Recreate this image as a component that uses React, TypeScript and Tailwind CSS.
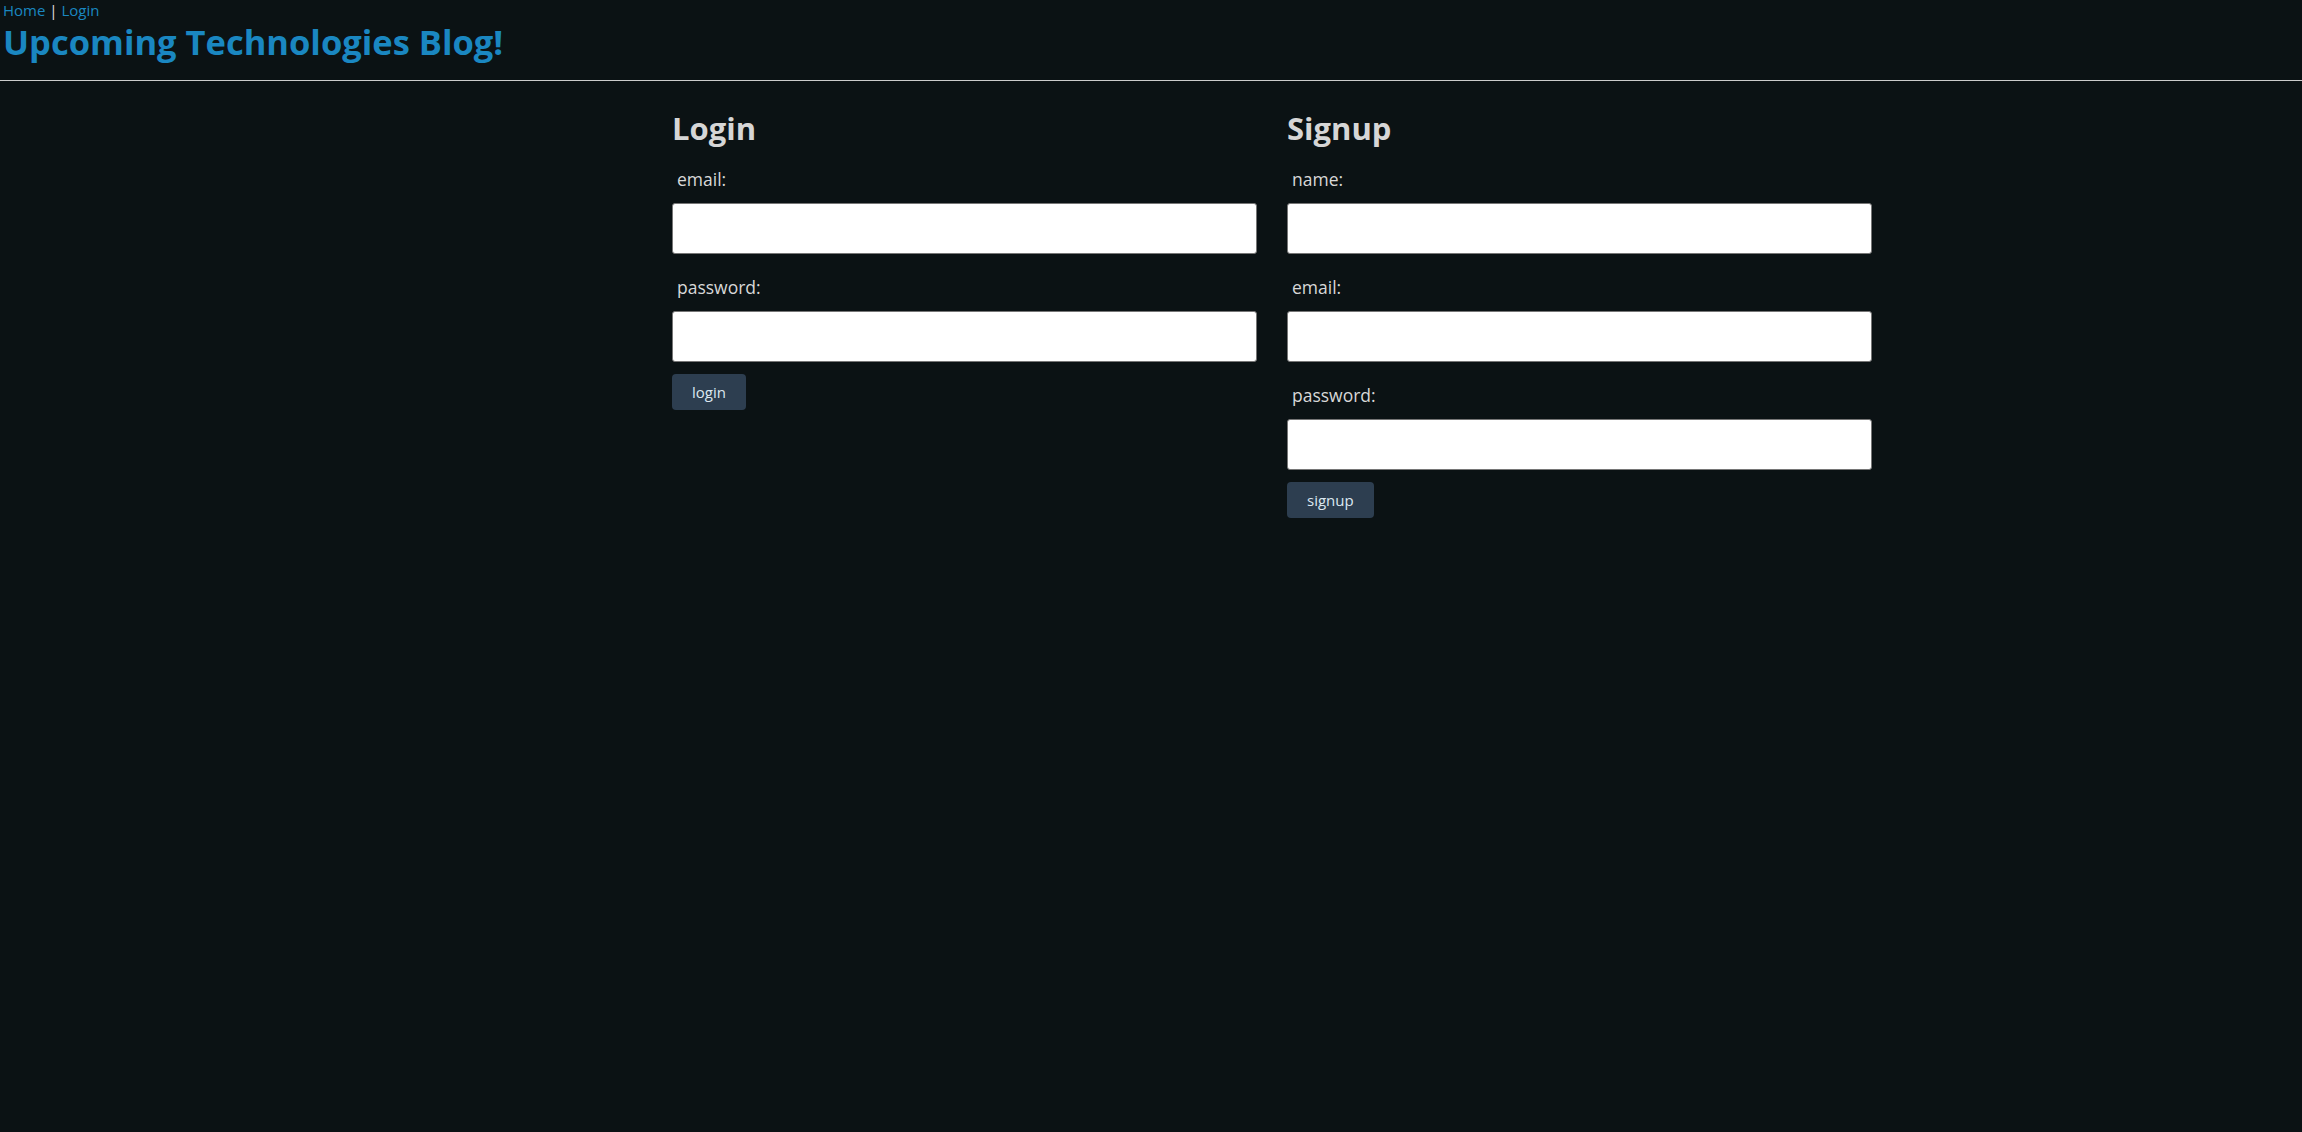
type FormProps = {
  title: string;
  fields: string[];
  button: string;
};

function AuthForm({ title, fields, button }: FormProps) {
  return (
    <form className="flex w-[585px] flex-col" onSubmit={(e) => e.preventDefault()}>
      <h2 className="text-[31px] font-bold leading-[40px] text-[#d6d6d6]">{title}</h2>
      <div className="mt-[19px] flex flex-col gap-[21px]">
        {fields.map((field) => (
          <div key={field} className="flex flex-col">
            <label className="pl-[5px] text-[17.5px] leading-[24px] text-[#d8d8d8]">{field}:</label>
            <input
              type={field === "password" ? "password" : "text"}
              className="mt-[12px] h-[51px] w-full rounded-[3px] border border-[#767676] bg-white px-2 text-black outline-none"
            />
          </div>
        ))}
      </div>
      <div className="mt-[12px]">
        <button className="h-[36px] rounded-[4px] bg-[#2d3e50] px-[20px] text-[15px] text-[#dce8f1]">
          {button}
        </button>
      </div>
    </form>
  );
}

export default function App() {
  return (
    <div className="min-h-screen bg-[#0b1214] font-['Open_Sans',sans-serif]">
      <header className="px-[3px]">
        <nav className="text-[15px] leading-[21px] text-[#1a87c0]">
          <a href="#">Home</a> <span className="text-[#e0e0e0]">|</span> <a href="#">Login</a>
        </nav>
        <h1 className="mt-[2px] text-[34.5px] font-bold leading-[38px] text-[#1a87c1]">Upcoming Technologies Blog!</h1>
      </header>
      <hr className="mt-[19px] border-0 border-t border-[#cccccc]" />
      <main className="flex gap-[30px] pl-[672px] pt-[27px]">
        <AuthForm title="Login" fields={["email", "password"]} button="login" />
        <AuthForm title="Signup" fields={["name", "email", "password"]} button="signup" />
      </main>
    </div>
  );
}
